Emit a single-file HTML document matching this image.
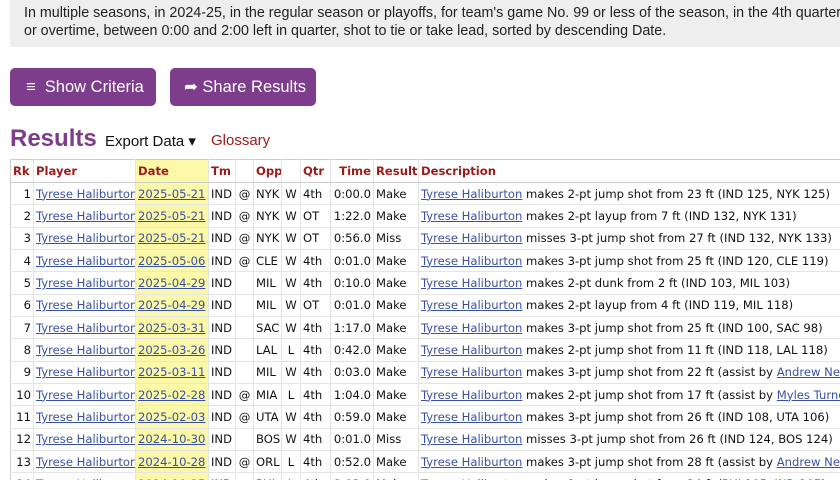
<!DOCTYPE html>
<html><head><meta charset="utf-8"><style>
*{margin:0;padding:0;box-sizing:border-box}
html,body{width:840px;height:480px;overflow:hidden}
body{background:#fff;font-family:"Liberation Sans",sans-serif;position:relative}
.crit{position:absolute;left:10px;top:0;width:840px;height:47px;background:#eeeeee;font-size:14.3px;line-height:18px;color:#222;padding:4px 0 0 14px}
.btn{position:absolute;top:68px;height:38px;background:#7d3c8c;border-radius:5px;color:#fff;font-size:16.5px;line-height:38px}
h2{position:absolute;left:10px;top:125px;font-size:24px;font-weight:bold;color:#7d3c8c}
.exp{position:absolute;left:105px;top:132px;font-size:15px;color:#111}
.glo{position:absolute;left:211px;top:132px;font-size:15px;color:#9b1b1b}
table{position:absolute;left:10px;top:159px;border-collapse:collapse;table-layout:fixed;font-family:"DejaVu Sans",sans-serif;font-size:11.6px;color:#111;width:880px}
td,th{height:22.33px;border-bottom:1px solid #e4e4e4;border-right:1px solid #e4e4e4;padding:0 2px;white-space:nowrap;overflow:hidden;text-align:left}
th{color:#9b1b1b;font-weight:bold;border-top:1px solid #ccc;border-bottom:1px solid #ccc;height:23px}
tr td:first-child,tr th:first-child{border-left:1px solid #ccc}
.r{text-align:right}.c{text-align:center}
.d{background:#fbf8a8}
a{color:#3a51a3;text-decoration:underline}
</style></head><body>
<div class="crit">In multiple seasons, in 2024-25, in the regular season or playoffs, for team's game No. 99 or less of the season, in the 4th quarter<br>or overtime, between 0:00 and 2:00 left in quarter, shot to tie or take lead, sorted by descending Date.</div>
<div class="btn" style="left:10px;width:146px;padding-left:16px">≡&nbsp;&nbsp;Show Criteria</div>
<div class="btn" style="left:170px;width:146px;padding-left:14px">➦ Share Results</div>
<h2>Results</h2>
<div class="exp">Export Data ▾</div>
<div class="glo">Glossary</div>
<table>
<colgroup><col style="width:23px"><col style="width:102px"><col style="width:73px"><col style="width:27px"><col style="width:18px"><col style="width:28px"><col style="width:19px"><col style="width:30px"><col style="width:43px"><col style="width:45px"><col style="width:472px"></colgroup>
<tr><th>Rk</th><th>Player</th><th class="d">Date</th><th>Tm</th><th></th><th>Opp</th><th></th><th>Qtr</th><th class="r">Time</th><th>Result</th><th>Description</th></tr>
<tr><td class="r">1</td><td><a>Tyrese Haliburton</a></td><td class="d"><a>2025-05-21</a></td><td>IND</td><td class="c">@</td><td>NYK</td><td class="c">W</td><td>4th</td><td class="r">0:00.0</td><td>Make</td><td><a>Tyrese Haliburton</a> makes 2-pt jump shot from 23 ft (IND 125, NYK 125)</td></tr>
<tr><td class="r">2</td><td><a>Tyrese Haliburton</a></td><td class="d"><a>2025-05-21</a></td><td>IND</td><td class="c">@</td><td>NYK</td><td class="c">W</td><td>OT</td><td class="r">1:22.0</td><td>Make</td><td><a>Tyrese Haliburton</a> makes 2-pt layup from 7 ft (IND 132, NYK 131)</td></tr>
<tr><td class="r">3</td><td><a>Tyrese Haliburton</a></td><td class="d"><a>2025-05-21</a></td><td>IND</td><td class="c">@</td><td>NYK</td><td class="c">W</td><td>OT</td><td class="r">0:56.0</td><td>Miss</td><td><a>Tyrese Haliburton</a> misses 3-pt jump shot from 27 ft (IND 132, NYK 133)</td></tr>
<tr><td class="r">4</td><td><a>Tyrese Haliburton</a></td><td class="d"><a>2025-05-06</a></td><td>IND</td><td class="c">@</td><td>CLE</td><td class="c">W</td><td>4th</td><td class="r">0:01.0</td><td>Make</td><td><a>Tyrese Haliburton</a> makes 3-pt jump shot from 25 ft (IND 120, CLE 119)</td></tr>
<tr><td class="r">5</td><td><a>Tyrese Haliburton</a></td><td class="d"><a>2025-04-29</a></td><td>IND</td><td class="c"></td><td>MIL</td><td class="c">W</td><td>4th</td><td class="r">0:10.0</td><td>Make</td><td><a>Tyrese Haliburton</a> makes 2-pt dunk from 2 ft (IND 103, MIL 103)</td></tr>
<tr><td class="r">6</td><td><a>Tyrese Haliburton</a></td><td class="d"><a>2025-04-29</a></td><td>IND</td><td class="c"></td><td>MIL</td><td class="c">W</td><td>OT</td><td class="r">0:01.0</td><td>Make</td><td><a>Tyrese Haliburton</a> makes 2-pt layup from 4 ft (IND 119, MIL 118)</td></tr>
<tr><td class="r">7</td><td><a>Tyrese Haliburton</a></td><td class="d"><a>2025-03-31</a></td><td>IND</td><td class="c"></td><td>SAC</td><td class="c">W</td><td>4th</td><td class="r">1:17.0</td><td>Make</td><td><a>Tyrese Haliburton</a> makes 3-pt jump shot from 25 ft (IND 100, SAC 98)</td></tr>
<tr><td class="r">8</td><td><a>Tyrese Haliburton</a></td><td class="d"><a>2025-03-26</a></td><td>IND</td><td class="c"></td><td>LAL</td><td class="c">L</td><td>4th</td><td class="r">0:42.0</td><td>Make</td><td><a>Tyrese Haliburton</a> makes 2-pt jump shot from 11 ft (IND 118, LAL 118)</td></tr>
<tr><td class="r">9</td><td><a>Tyrese Haliburton</a></td><td class="d"><a>2025-03-11</a></td><td>IND</td><td class="c"></td><td>MIL</td><td class="c">W</td><td>4th</td><td class="r">0:03.0</td><td>Make</td><td><a>Tyrese Haliburton</a> makes 3-pt jump shot from 22 ft (assist by <a>Andrew Nembhard</a>)</td></tr>
<tr><td class="r">10</td><td><a>Tyrese Haliburton</a></td><td class="d"><a>2025-02-28</a></td><td>IND</td><td class="c">@</td><td>MIA</td><td class="c">L</td><td>4th</td><td class="r">1:04.0</td><td>Make</td><td><a>Tyrese Haliburton</a> makes 2-pt jump shot from 17 ft (assist by <a>Myles Turner</a>)</td></tr>
<tr><td class="r">11</td><td><a>Tyrese Haliburton</a></td><td class="d"><a>2025-02-03</a></td><td>IND</td><td class="c">@</td><td>UTA</td><td class="c">W</td><td>4th</td><td class="r">0:59.0</td><td>Make</td><td><a>Tyrese Haliburton</a> makes 3-pt jump shot from 26 ft (IND 108, UTA 106)</td></tr>
<tr><td class="r">12</td><td><a>Tyrese Haliburton</a></td><td class="d"><a>2024-10-30</a></td><td>IND</td><td class="c"></td><td>BOS</td><td class="c">W</td><td>4th</td><td class="r">0:01.0</td><td>Miss</td><td><a>Tyrese Haliburton</a> misses 3-pt jump shot from 26 ft (IND 124, BOS 124)</td></tr>
<tr><td class="r">13</td><td><a>Tyrese Haliburton</a></td><td class="d"><a>2024-10-28</a></td><td>IND</td><td class="c">@</td><td>ORL</td><td class="c">L</td><td>4th</td><td class="r">0:52.0</td><td>Make</td><td><a>Tyrese Haliburton</a> makes 3-pt jump shot from 28 ft (assist by <a>Andrew Nembhard</a>)</td></tr>
<tr><td class="r">14</td><td><a>Tyrese Haliburton</a></td><td class="d"><a>2024-10-25</a></td><td>IND</td><td class="c"></td><td>PHI</td><td class="c">L</td><td>4th</td><td class="r">1:02.0</td><td>Make</td><td><a>Tyrese Haliburton</a> makes 2-pt jump shot from 24 ft (PHI 105, IND 105)</td></tr>
</table>
</body></html>
